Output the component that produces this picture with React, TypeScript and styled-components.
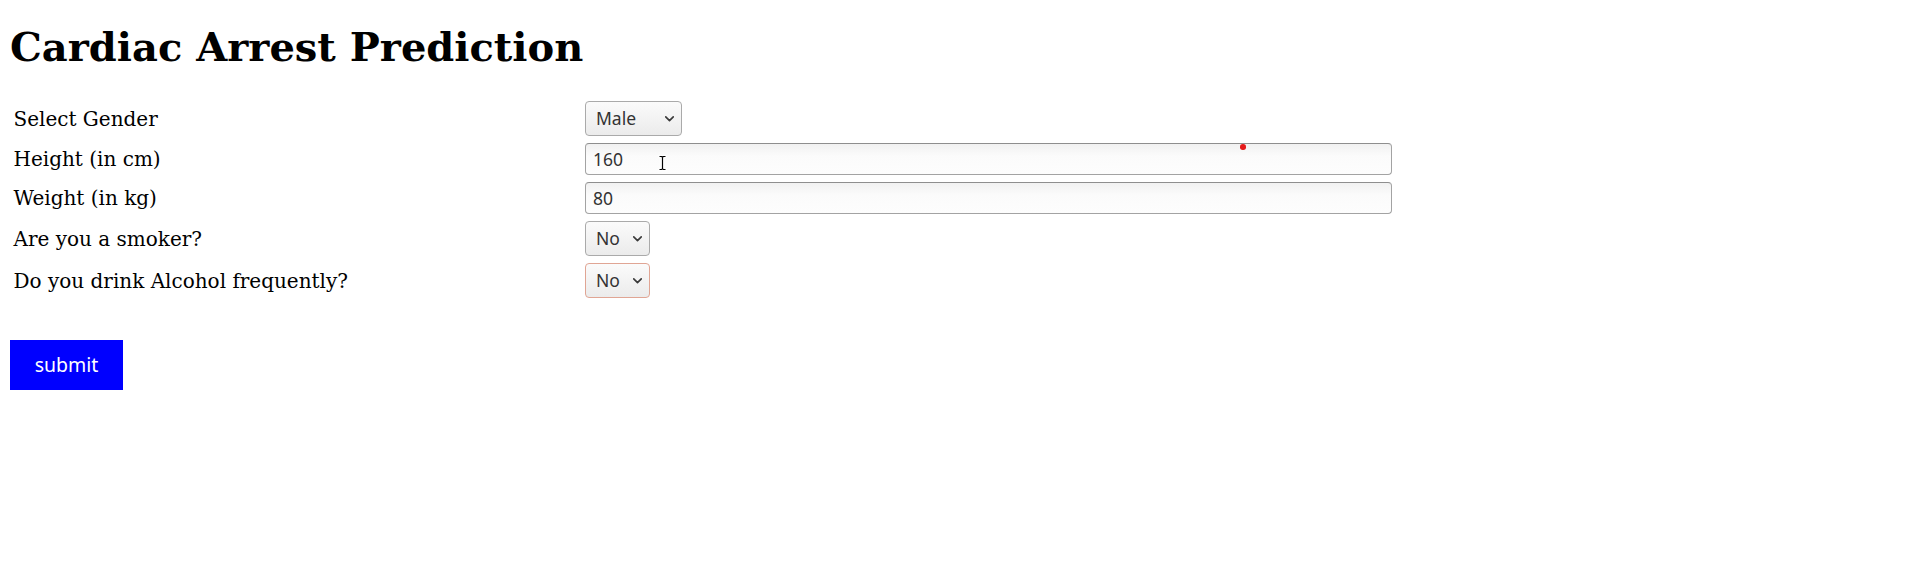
import styled, { createGlobalStyle } from "styled-components";
import { ChevronDown } from "lucide-react";

const GlobalStyle = createGlobalStyle`
  html, body {
    margin: 0;
    padding: 0;
    background: #ffffff;
  }
  body {
    font-family: "DejaVu Serif", "Liberation Serif", serif;
    color: #000000;
  }
`;

const rows: {
  label: string;
  kind: "select" | "input";
  value: string;
  options?: string[];
  width?: number;
  focused?: boolean;
}[] = [
  { label: "Select Gender", kind: "select", value: "Male", options: ["Male", "Female"], width: 97 },
  { label: "Height (in cm)", kind: "input", value: "160" },
  { label: "Weight (in kg)", kind: "input", value: "80" },
  { label: "Are you a smoker?", kind: "select", value: "No", options: ["No", "Yes"], width: 65 },
  {
    label: "Do you drink Alcohol frequently?",
    kind: "select",
    value: "No",
    options: ["No", "Yes"],
    width: 65,
    focused: true,
  },
];

export default function App() {
  return (
    <Page>
      <GlobalStyle />
      <Title>Cardiac Arrest Prediction</Title>
      <Form onSubmit={(e) => e.preventDefault()}>
        <FieldGrid>
          {rows.map((row) => (
            <FieldRow key={row.label}>
              <Label>{row.label}</Label>
              <Control>
                {row.kind === "select" ? (
                  <SelectWrap>
                    <Select
                      defaultValue={row.value}
                      $width={row.width || 80}
                      $focused={!!row.focused}
                    >
                      {row.options?.map((o) => (
                        <option key={o} value={o}>
                          {o}
                        </option>
                      ))}
                    </Select>
                    <Chevron>
                      <ChevronDown size={15} strokeWidth={2.6} />
                    </Chevron>
                  </SelectWrap>
                ) : (
                  <TextInput type="text" defaultValue={row.value} />
                )}
              </Control>
            </FieldRow>
          ))}
        </FieldGrid>
        <SubmitButton type="submit">submit</SubmitButton>
      </Form>
      <RecordDot />
      <TextCursor>
        <svg width="9" height="16" viewBox="0 0 9 16">
          <path
            d="M1.5 1.5h2.2l0.8 0.8 0.8-0.8h2.2M4.5 2.3v11.4M1.5 14.5h2.2l0.8-0.8 0.8 0.8h2.2"
            fill="none"
            stroke="#ffffff"
            strokeWidth="3"
            strokeLinecap="round"
          />
          <path
            d="M1.5 1.5h2.2l0.8 0.8 0.8-0.8h2.2M4.5 2.3v11.4M1.5 14.5h2.2l0.8-0.8 0.8 0.8h2.2"
            fill="none"
            stroke="#000000"
            strokeWidth="1.2"
          />
        </svg>
      </TextCursor>
    </Page>
  );
}

const Page = styled.div`
  position: relative;
  width: 1920px;
  min-height: 567px;
  padding: 0 10px;
  box-sizing: border-box;
`;

const Title = styled.h1`
  margin: 0;
  padding-top: 24px;
  font-family: "DejaVu Serif", "Liberation Serif", serif;
  font-weight: 700;
  font-size: 40px;
  line-height: 46.6px;
`;

const Form = styled.form`
  display: flex;
  flex-direction: column;
  align-items: flex-start;
  margin-top: 30.4px;
`;

const FieldGrid = styled.div`
  display: flex;
  flex-direction: column;
  gap: 7px;
`;

const FieldRow = styled.div`
  display: grid;
  grid-template-columns: 575px 807px;
  align-items: center;
`;

const Label = styled.span`
  padding: 2px 0 0 3.5px;
  font-size: 20px;
  line-height: 23px;
  color: #000000;
`;

const Control = styled.div`
  display: flex;
  align-items: center;
`;

const SelectWrap = styled.div`
  position: relative;
  display: inline-flex;
`;

const Select = styled.select<{ $width: number; $focused: boolean }>`
  appearance: none;
  -webkit-appearance: none;
  width: ${(p) => p.$width}px;
  height: 35px;
  padding: 0 26px 0 10px;
  box-sizing: border-box;
  border: 1px solid ${(p) => (p.$focused ? "#e0a594" : "#aaaaaa")};
  border-radius: 4px;
  background: linear-gradient(#fbfbfb, #ebebeb);
  font-family: "Noto Sans", "Open Sans", sans-serif;
  font-size: 17.5px;
  color: #333333;
  outline: none;
  cursor: pointer;
`;

const Chevron = styled.span`
  position: absolute;
  right: 5px;
  top: 50%;
  transform: translateY(-45%);
  display: flex;
  color: #3a3a3a;
  pointer-events: none;
`;

const TextInput = styled.input`
  width: 807px;
  height: 32px;
  box-sizing: border-box;
  padding: 0 7px;
  border: 1px solid #a3a3a3;
  border-top-color: #8e8e8e;
  border-radius: 4px;
  background: linear-gradient(#f1f1f1, #fbfbfb 40%, #fdfdfd);
  font-family: "Noto Sans", "Open Sans", sans-serif;
  font-size: 17.5px;
  color: #333333;
  outline: none;
`;

const SubmitButton = styled.button`
  margin-top: 42px;
  width: 113px;
  height: 50px;
  padding: 0;
  border: none;
  border-radius: 0;
  background: #0000ff;
  color: #ffffff;
  font-family: "Noto Sans", "Open Sans", sans-serif;
  font-size: 19.5px;
  cursor: pointer;
`;

const RecordDot = styled.span`
  position: absolute;
  left: 1240px;
  top: 144px;
  width: 5.5px;
  height: 5.5px;
  border-radius: 50%;
  background: #e51c1c;
`;

const TextCursor = styled.span`
  position: absolute;
  left: 658px;
  top: 155px;
  display: flex;
  pointer-events: none;
`;
